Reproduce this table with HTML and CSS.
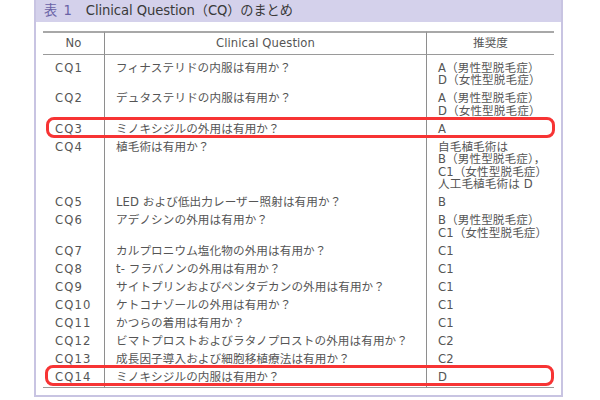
FILE: index.html
```html
<!DOCTYPE html>
<html lang="ja">
<head>
<meta charset="utf-8">
<title>Clinical Question（CQ）のまとめ</title>
<link rel="stylesheet" href="styles.css">
</head>
<body>
<div class="frame">
  <div class="title"><span class="num">表 1</span><span class="ttl">Clinical Question（CQ）のまとめ</span></div>
  <table class="cq">
    <colgroup><col class="c1"><col class="c2"><col class="c3"></colgroup>
    <thead>
      <tr><th>No</th><th>Clinical Question</th><th>推奨度</th></tr>
    </thead>
    <tbody>
      <tr class="first"><td class="no">CQ1</td><td>フィナステリドの内服は有用か？</td><td>A（男性型脱毛症）<br>D（女性型脱毛症）</td></tr>
      <tr><td class="no">CQ2</td><td>デュタステリドの内服は有用か？</td><td>A（男性型脱毛症）<br>D（女性型脱毛症）</td></tr>
      <tr><td class="no">CQ3</td><td>ミノキシジルの外用は有用か？</td><td>A</td></tr>
      <tr><td class="no">CQ4</td><td>植毛術は有用か？</td><td>自毛植毛術は<br>B（男性型脱毛症），<br>C1（女性型脱毛症）<br>人工毛植毛術は D</td></tr>
      <tr><td class="no">CQ5</td><td>LED および低出力レーザー照射は有用か？</td><td>B</td></tr>
      <tr><td class="no">CQ6</td><td>アデノシンの外用は有用か？</td><td>B（男性型脱毛症）<br>C1（女性型脱毛症）</td></tr>
      <tr><td class="no">CQ7</td><td>カルプロニウム塩化物の外用は有用か？</td><td>C1</td></tr>
      <tr><td class="no">CQ8</td><td>t- フラバノンの外用は有用か？</td><td>C1</td></tr>
      <tr><td class="no">CQ9</td><td>サイトプリンおよびペンタデカンの外用は有用か？</td><td>C1</td></tr>
      <tr><td class="no">CQ10</td><td>ケトコナゾールの外用は有用か？</td><td>C1</td></tr>
      <tr><td class="no">CQ11</td><td>かつらの着用は有用か？</td><td>C1</td></tr>
      <tr><td class="no">CQ12</td><td>ビマトプロストおよびラタノプロストの外用は有用か？</td><td>C2</td></tr>
      <tr><td class="no">CQ13</td><td>成長因子導入および細胞移植療法は有用か？</td><td>C2</td></tr>
      <tr class="last"><td class="no">CQ14</td><td>ミノキシジルの内服は有用か？</td><td>D</td></tr>
    </tbody>
  </table>
  <div class="mark mark-cq3"></div>
  <div class="mark mark-cq14"></div>
</div>
</body>
</html>
```
FILE: styles.css
```css
html, body {
  margin: 0;
  padding: 0;
  background: #ffffff;
}
body {
  font-family: "DejaVu Sans", "Noto Sans CJK JP", sans-serif;
  color: #555555;
}
.frame {
  position: relative;
  margin-left: 34px;
  width: 525px;
  height: 395px;
  border: 2px solid #c8c4e2;
  border-top: none;
  overflow: hidden;
}
.title {
  height: 22px;
  background: #d4d1eb;
  display: flex;
  align-items: center;
  padding-left: 8px;
  font-size: 13.2px;
  line-height: 22px;
  color: #3a3a3a;
}
.num {
  color: #6a62a6;
  margin-right: 13px;
  letter-spacing: 1px;
}
.ttl {
  letter-spacing: -0.1px;
}
.cq {
  margin: 9px 7px 0;
  width: 511px;
  table-layout: fixed;
  border-collapse: separate;
  border-spacing: 0;
  font-size: 11.6px;
  letter-spacing: 0.1px;
}
.c1 { width: 61px; }
.c2 { width: 322px; }
.c3 { width: 128px; }
.cq th {
  font-weight: normal;
  height: 21px;
  line-height: 21px;
  padding: 0;
  text-align: center;
  border-top: 2px solid #a8a8a8;
  border-bottom: 1px solid #9a9a9a;
}
.cq td {
  padding: 3px 0 2.5px 11px;
  line-height: 12.5px;
  vertical-align: top;
  white-space: nowrap;
}
.cq th + th,
.cq td + td {
  border-left: 1px solid #8e8e8e;
}
.cq td.no {
  padding-left: 12px;
  letter-spacing: 1.1px;
}
.cq tr.first td {
  padding-top: 6.5px;
}
.cq tr.last td {
  padding-bottom: 4px;
  border-bottom: 1.5px solid #9a9a9a;
}
.mark {
  position: absolute;
  box-sizing: border-box;
  border: 3px solid #f73434;
  border-radius: 8px;
  width: 509px;
  height: 21px;
}
.mark-cq3 {
  left: 10px;
  top: 117px;
}
.mark-cq14 {
  left: 9px;
  top: 365px;
}
```
